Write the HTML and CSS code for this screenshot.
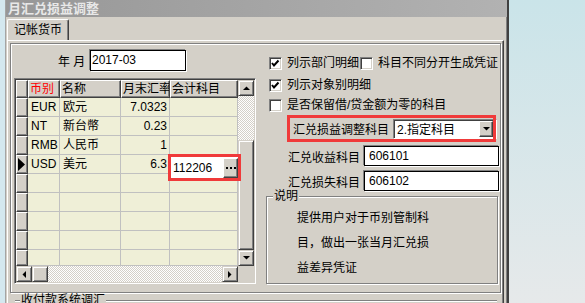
FILE: index.html
```html
<!DOCTYPE html>
<html lang="zh-CN">
<head>
    <meta charset="UTF-8">
    <title>月汇兑损益调整</title>
    <link rel="stylesheet" href="styles.css">
</head>
<body>
    <div class="desk-edge"></div>
    <div class="window">
        <div class="titlebar">月汇兑损益调整</div>
        <div class="tabs"><div class="tab">记帐货币</div></div>
        <div class="tab-page">
            <div class="frame">
                <div class="left-col">
                    <div class="ym-row">
                        <span class="ym-label">年 月</span>
                        <div class="textbox ym-box">2017-03</div>
                    </div>
                    <div class="grid">
                        <div class="grid-body">
                            <div class="cells">
                                <div class="ind"></div><div class="hd red">币别</div><div class="hd">名称</div><div class="hd">月末汇率</div><div class="hd">会计科目</div>

                                <div class="ind"></div><div class="c">EUR</div><div class="c">欧元</div><div class="c num">7.0323</div><div class="c"></div>
                                <div class="ind"></div><div class="c">NT</div><div class="c">新台幣</div><div class="c num">0.23</div><div class="c"></div>
                                <div class="ind"></div><div class="c">RMB</div><div class="c">人民币</div><div class="c num">1</div><div class="c"></div>
                                <div class="ind cur"><svg width="7" height="13" viewBox="0 0 7 13"><polygon points="0,0 0,13 7,6.5" fill="#000"/></svg></div><div class="c">USD</div><div class="c">美元</div><div class="c num">6.3</div>
                                <div class="c edit">
                                    <div class="editor">
                                        <span>112206</span>
                                        <span class="dots-btn"><svg width="10" height="2" viewBox="0 0 10 2"><rect x="0" y="0" width="2" height="2"/><rect x="4" y="0" width="2" height="2"/><rect x="8" y="0" width="2" height="2"/></svg></span>
                                    </div>
                                </div>

                                <div class="ind"></div><div class="c"></div><div class="c"></div><div class="c"></div><div class="c"></div>
                                <div class="ind"></div><div class="c"></div><div class="c"></div><div class="c"></div><div class="c"></div>
                                <div class="ind"></div><div class="c"></div><div class="c"></div><div class="c"></div><div class="c"></div>
                                <div class="ind"></div><div class="c"></div><div class="c"></div><div class="c"></div><div class="c"></div>
                                <div class="ind"></div><div class="c"></div><div class="c"></div><div class="c"></div><div class="c"></div>
                            </div>
                            <div class="vscroll">
                                <div class="sbtn"><svg width="7" height="4" viewBox="0 0 7 4"><polygon points="0,4 3.5,0.5 7,4"/></svg></div>
                                <div class="track v-track"></div>
                                <div class="thumb v-thumb"></div>
                                <div class="sbtn"><svg width="7" height="4" viewBox="0 0 7 4"><polygon points="0,0 7,0 3.5,3.5"/></svg></div>
                            </div>
                        </div>
                        <div class="hscroll">
                            <div class="sbtn"><svg width="4" height="7" viewBox="0 0 4 7"><polygon points="4,0 4,7 0.5,3.5"/></svg></div>
                            <div class="thumb h-thumb"></div>
                            <div class="track h-track"></div>
                            <div class="sbtn"><svg width="4" height="7" viewBox="0 0 4 7"><polygon points="0,0 0,7 3.5,3.5"/></svg></div>
                            <div class="corner"></div>
                        </div>
                    </div>
                </div>

                <div class="right-col">
                    <div class="check-row row1">
                        <span class="cb"><svg width="11" height="11" viewBox="0 0 11 11"><polyline points="2,5 4,7.5 8.5,2.5" fill="none" stroke="#000" stroke-width="2"/></svg></span>
                        <span class="cb-text">列示部门明细</span>
                        <span class="cb cb-second"></span>
                        <span class="cb-text">科目不同分开生成凭证</span>
                    </div>
                    <div class="check-row row2">
                        <span class="cb"><svg width="11" height="11" viewBox="0 0 11 11"><polyline points="2,5 4,7.5 8.5,2.5" fill="none" stroke="#000" stroke-width="2"/></svg></span>
                        <span class="cb-text">列示对象别明细</span>
                    </div>
                    <div class="check-row row3">
                        <span class="cb"></span>
                        <span class="cb-text">是否保留借/贷金额为零的科目</span>
                    </div>

                    <div class="hl-row">
                        <span class="hl-label">汇兑损益调整科目</span>
                        <div class="combo">
                            <span>2.指定科目</span>
                            <span class="drop"><svg width="7" height="4" viewBox="0 0 7 4"><polygon points="0,0 7,0 3.5,3.5"/></svg></span>
                        </div>
                    </div>

                    <div class="field-row first">
                        <span class="field-label">汇兑收益科目</span>
                        <div class="textbox field">606101</div>
                    </div>
                    <div class="field-row">
                        <span class="field-label">汇兑损失科目</span>
                        <div class="textbox field">606102</div>
                    </div>

                    <div class="note">
                        <div class="note-title">说明</div>
                        <div class="note-text">提供用户对于币别管制科<br>目，做出一张当月汇兑损<br>益差异凭证</div>
                    </div>
                </div>
            </div>

            <div class="bottom-group">
                <div class="note-title">收付款系统调汇</div>
            </div>
        </div>
    </div>
</body>
</html>
```

FILE: styles.css
```css
body {
    margin: 0;
    width: 585px;
    height: 303px;
    overflow: hidden;
    display: flex;
    background: linear-gradient(#cae4e9, #e6e9ea);
    font-family: "Liberation Sans", "Noto Sans CJK SC", sans-serif;
    font-size: 12px;
    color: #000;
}

.desk-edge {
    width: 5px;
    background: #d4e8ef;
}

.window {
    width: 504px;
    box-sizing: border-box;
    background-color: #d4d0c8;
    border-left: 1px solid #a4a4a4;
    border-right: 2px solid #404040;
    box-shadow: inset -1px 0 #808080;
}

.titlebar {
    height: 17px;
    line-height: 17px;
    padding-left: 2px;
    background: linear-gradient(to right, #979797, #b2b2b2);
    color: #e8e8e8;
    font-size: 13px;
    font-weight: bold;
}

.tabs {
    height: 21px;
    padding: 2px 0 0 1px;
}

.tab {
    width: 62px;
    height: 21px;
    box-sizing: border-box;
    padding-left: 6px;
    line-height: 20px;
    border-top: 1px solid #fff;
    border-left: 1px solid #fff;
    border-right: 1px solid #404040;
    border-radius: 2px 2px 0 0;
    box-shadow: inset -1px 0 #808080;
}

.tab-page {
    margin-left: 1px;
    width: 497px;
    box-sizing: border-box;
    padding: 2px 0 0 2px;
    border-top: 1px solid #fff;
    border-left: 1px solid #fff;
    border-right: 1px solid #404040;
    box-shadow: inset -1px 0 #808080;
}

.frame {
    display: flex;
    width: 491px;
    height: 250px;
    box-sizing: border-box;
    border: 1px solid #808080;
    box-shadow: inset 1px 1px #fff, 1px 1px #fff;
}

/* left column: year/month + grid */

.left-col {
    flex: none;
    width: 245px;
    box-sizing: border-box;
    padding-left: 3px;
}

.ym-row {
    display: flex;
    align-items: center;
    height: 21px;
    margin-top: 6px;
}

.ym-label {
    width: 28px;
    margin-left: 44px;
    white-space: nowrap;
}

.textbox {
    box-sizing: border-box;
    background: #fff;
    border: 1px solid #000;
    box-shadow: -1px -1px #808080, 1px 1px #fff;
    white-space: nowrap;
}

.ym-box {
    width: 96px;
    height: 21px;
    margin-left: 4px;
    padding-left: 1px;
    line-height: 19px;
}

.grid {
    width: 242px;
    height: 206px;
    margin-top: 7px;
    box-sizing: border-box;
    padding: 1px;
    border: 1px solid;
    border-color: #808080 #fff #fff #808080;
    box-shadow: inset 1px 1px #404040, inset -1px -1px #d4d0c8;
}

.grid-body {
    display: flex;
    height: 186px;
}

.cells {
    width: 222px;
    display: grid;
    grid-template-columns: 12px 32px 61px 49px 68px;
    grid-template-rows: 18px repeat(8, 19px) 16px;
    background: #efefd7;
}

.hd,
.ind {
    box-sizing: border-box;
    background: #d4d0c8;
    border-top: 1px solid #fff;
    border-left: 1px solid #fff;
    border-right: 1px solid #404040;
    border-bottom: 1px solid #404040;
    box-shadow: inset -1px -1px #808080;
}

.hd {
    padding-left: 1px;
    line-height: 16px;
    white-space: nowrap;
    overflow: hidden;
}

.red {
    color: #ff0000;
}

.ind.cur {
    display: flex;
    align-items: center;
    padding-left: 1px;
}

.c {
    box-sizing: border-box;
    padding: 0 2px 0 3px;
    line-height: 18px;
    border-right: 1px solid #c0c0c0;
    border-bottom: 1px solid #c0c0c0;
    white-space: nowrap;
    overflow: hidden;
}

.num {
    text-align: right;
}

.c.edit {
    position: relative;
    overflow: visible;
}

.editor {
    position: absolute;
    left: -2px;
    top: -1px;
    z-index: 1;
    display: flex;
    align-items: center;
    width: 73px;
    height: 27px;
    box-sizing: border-box;
    padding-left: 2px;
    background: #fff;
    border: 3px solid #f03a3a;
}

.dots-btn {
    display: flex;
    align-items: flex-end;
    justify-content: center;
    width: 15px;
    height: 20px;
    box-sizing: border-box;
    margin-left: auto;
    padding-bottom: 8px;
    background: #d4d0c8;
    border-top: 1px solid #fff;
    border-left: 1px solid #fff;
    border-right: 1px solid #404040;
    border-bottom: 1px solid #404040;
    box-shadow: inset -1px -1px #808080;
}

.vscroll {
    display: flex;
    flex-direction: column;
    width: 16px;
}

.hscroll {
    display: flex;
    height: 16px;
}

.sbtn,
.thumb {
    flex: none;
    box-sizing: border-box;
    background: #d4d0c8;
    border: 1px solid;
    border-color: #d4d0c8 #404040 #404040 #d4d0c8;
    box-shadow: inset 1px 1px #fff, inset -1px -1px #808080;
}

.sbtn {
    display: flex;
    align-items: center;
    justify-content: center;
    width: 16px;
    height: 16px;
}

.track {
    background: repeating-conic-gradient(#fff 0 25%, #d4d0c8 0 50%) 0 0 / 2px 2px;
}

.v-track {
    height: 44px;
}

.v-thumb {
    height: 110px;
}

.h-thumb {
    width: 16px;
}

.h-track {
    flex: 1;
}

.corner {
    width: 16px;
    background: #d4d0c8;
}

/* right column: options */

.right-col {
    flex: 1;
    padding-left: 13px;
}

.check-row {
    display: flex;
    align-items: center;
    height: 13px;
    line-height: 13px;
    white-space: nowrap;
}

.row1 {
    margin-top: 13px;
}

.row2 {
    margin-top: 9px;
}

.row3 {
    margin-top: 7px;
}

.cb {
    flex: none;
    width: 13px;
    height: 13px;
    box-sizing: border-box;
    margin-right: 5px;
    background: #fff;
    border: 1px solid;
    border-color: #808080 #fff #fff #808080;
    box-shadow: inset 1px 1px #404040, inset -1px -1px #d4d0c8;
}

.cb svg {
    display: block;
}

.cb-second {
    margin-left: 1px;
}

.hl-row {
    position: relative;
    display: flex;
    align-items: center;
    width: 209px;
    height: 27px;
    box-sizing: border-box;
    margin: 3px 0 0 18px;
    padding-left: 6px;
}

.hl-row::after {
    content: "";
    position: absolute;
    inset: 0;
    border: 3px solid #f03a3a;
    pointer-events: none;
}

.hl-label {
    width: 96px;
    white-space: nowrap;
}

.combo {
    flex: none;
    display: flex;
    align-items: center;
    width: 104px;
    height: 20px;
    box-sizing: border-box;
    margin-left: 4px;
    padding-left: 3px;
    background: #fff;
    border: 1px solid;
    border-color: #808080 #fff #fff #808080;
    box-shadow: inset 1px 1px #404040;
    white-space: nowrap;
}

.drop {
    display: flex;
    align-items: center;
    justify-content: center;
    width: 14px;
    height: 16px;
    box-sizing: border-box;
    margin: 0 3px 0 auto;
    background: #d4d0c8;
    border-top: 1px solid #fff;
    border-left: 1px solid #fff;
    border-right: 1px solid #404040;
    border-bottom: 1px solid #404040;
    box-shadow: inset -1px -1px #808080;
}

.field-row {
    display: flex;
    align-items: center;
    height: 20px;
    margin: 5px 0 0 19px;
}

.field-row.first {
    margin-top: 4px;
}

.field-label {
    width: 72px;
    white-space: nowrap;
}

.field {
    width: 135px;
    height: 20px;
    margin-left: 4px;
    padding-left: 4px;
    line-height: 18px;
}

.note {
    width: 232px;
    height: 88px;
    box-sizing: border-box;
    margin: 5px 0 0 -3px;
    border: 1px solid #808080;
    box-shadow: inset 1px 1px #fff, 1px 1px #fff;
}

.note-title {
    width: fit-content;
    margin: -7px 0 0 6px;
    padding: 0 1px;
    line-height: 12px;
    background: #d4d0c8;
    white-space: nowrap;
}

.note-text {
    padding: 4px 0 0 30px;
    line-height: 25px;
    white-space: nowrap;
}

.bottom-group {
    width: 482px;
    height: 20px;
    margin: 7px 0 0 5px;
    border-top: 1px solid #808080;
    box-shadow: inset 0 1px #fff;
}

.bottom-group .note-title {
    margin-left: 5px;
}
```
